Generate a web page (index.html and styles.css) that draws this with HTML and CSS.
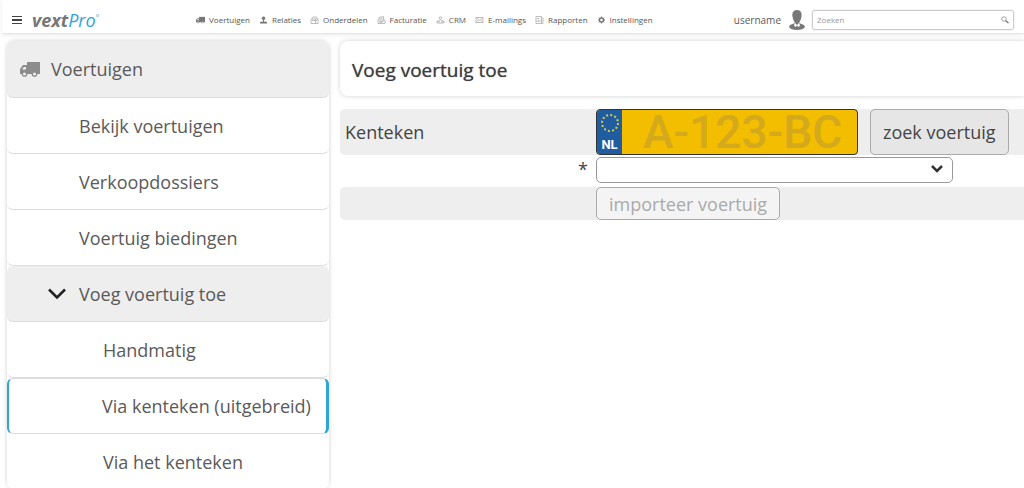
FILE: index.html
```
<!DOCTYPE html>
<html lang="nl">
<head>
    <meta charset="utf-8">
    <title>vextPro - Voeg voertuig toe</title>
    <link rel="stylesheet" href="styles.css">
</head>
<body>
    <svg class="defs" width="0" height="0">
        <symbol id="truck" viewBox="0 0 20 16">
            <path d="M7 1h13v12H0V8l3-4h4zM6 6H4L2 8.500h4z" fill="currentColor" fill-rule="evenodd"/>
            <circle cx="4.500" cy="13" r="2.200" fill="#eee" stroke="currentColor" stroke-width="1.300"/>
            <circle cx="14.500" cy="13" r="2.200" fill="#eee" stroke="currentColor" stroke-width="1.300"/>
        </symbol>
    </svg>

    <header class="topbar">
        <button class="menu-button" aria-label="Menu"></button>
        <a class="logo" href="#">vext<span>Pro</span><sup>°</sup></a>
        <nav class="topnav">
            <a href="#"><svg viewBox="0 0 20 16"><use href="#truck"/></svg>Voertuigen</a>
            <a href="#"><svg viewBox="0 0 16 16"><circle cx="8" cy="4.500" r="3.500" fill="currentColor"/><path d="M7 8h2v3l6 1v3H1v-3l6-1z" fill="currentColor"/></svg>Relaties</a>
            <a href="#"><svg class="light" viewBox="0 0 16 16"><path d="M1 6h14v9H1zM3 6l2-4h7l2 4M3 9h10M10 6v9" /></svg>Onderdelen</a>
            <a href="#"><svg class="light" viewBox="0 0 16 16"><path d="M3 8V3l9-2v8M1 8h14v7H1zM5 5l5-1M4 11h8M4 13h5"/></svg>Facturatie</a>
            <a href="#"><svg class="light" viewBox="0 0 16 16"><circle cx="8" cy="4" r="2.500"/><path d="M4 10q4-5 8 0M1 10h4v4H1zM11 10h4v4h-4zM5 14h6"/></svg>CRM</a>
            <a href="#"><svg class="light" viewBox="0 0 16 16"><path d="M1 3h14v10H1zL8 9l7-6M1 13l5-5M15 13l-5-5"/></svg>E-mailings</a>
            <a href="#"><svg class="light" viewBox="0 0 16 16"><path d="M1 1h11v14H1zM12 4h3v11h-3M3 5h5M3 12V9M6 12V7M9 12V8"/></svg>Rapporten</a>
            <a href="#"><svg viewBox="0 0 16 16"><circle cx="8" cy="8" r="4" fill="none" stroke="currentColor" stroke-width="3"/><path d="M8 1v3M8 12v3M1 8h3M12 8h3M3 3l2 2M11 11l2 2M3 13l2-2M11 5l2-2" stroke="currentColor" stroke-width="2"/></svg>Instellingen</a>
        </nav>
        <a class="user" href="#">username
            <svg viewBox="0 0 16 20"><path d="M8 0c4 0 5 3 4.500 6.500C12 10 11 11 10 13l5 2 1 2c-1 2-4 3-8 3s-7-1-8-3l1-2 5-2C5 11 4 10 3.500 6.500 3 3 4 0 8 0z" fill="#777"/><path d="M6 13l2 2 2-2 1 2-1 2-2-1-2 1-1-2z" fill="#fff"/><path d="M8 15l1 4H7z" fill="#777"/></svg>
        </a>
        <form class="search">
            <input type="text" placeholder="Zoeken" aria-label="Zoeken">
            <svg viewBox="0 0 16 16"><circle cx="6" cy="6" r="4.500" fill="none" stroke="#888" stroke-width="1.500"/><path d="M9.500 9.500L15 14" stroke="#777" stroke-width="3"/></svg>
        </form>
    </header>

    <div class="page">
        <nav class="sidebar">
            <a class="item head" href="#"><svg class="truck" viewBox="0 0 20 16"><use href="#truck"/></svg>Voertuigen</a>
            <a class="item sub" href="#">Bekijk voertuigen</a>
            <a class="item sub" href="#">Verkoopdossiers</a>
            <a class="item sub" href="#">Voertuig biedingen</a>
            <a class="item open" href="#"><svg class="chevron" viewBox="0 0 18 12"><path d="M1 1.500l8 8 8-8" fill="none" stroke="#222" stroke-width="2.500"/></svg>Voeg voertuig toe</a>
            <a class="item leaf" href="#">Handmatig</a>
            <a class="item leaf active" href="#">Via kenteken (uitgebreid)</a>
            <a class="item leaf" href="#">Via het kenteken</a>
        </nav>

        <main class="content">
            <h1 class="title">Voeg voertuig toe</h1>
            <form class="form">
                <div class="row shaded">
                    <label for="plate">Kenteken</label>
                    <div class="plate">
                        <div class="country">
                            <svg viewBox="0 0 20 20"><circle cx="10" cy="10" r="8" fill="none" stroke="#d3cb45" stroke-width="2" stroke-dasharray="2 2.189"/></svg>
                            NL
                        </div>
                        <input type="text" id="plate" placeholder="A-123-BC">
                    </div>
                    <button type="button" class="find">zoek voertuig</button>
                </div>
                <div class="row choice">
                    <label for="type">*</label>
                    <div class="select">
                        <select id="type"><option></option></select>
                        <svg viewBox="0 0 12 8"><path d="M1 1l5 5 5-5" fill="none" stroke="#333" stroke-width="2.500"/></svg>
                    </div>
                </div>
                <div class="row shaded">
                    <span class="empty"></span>
                    <button type="button" class="import" disabled>importeer voertuig</button>
                </div>
            </form>
        </main>
    </div>
</body>
</html>
```
FILE: styles.css
```
* { box-sizing: border-box; }
body { margin: 0; height: 100vh; overflow: hidden; display: flex; flex-direction: column; background: #fff; color: #5a5a5a; font-family: "Open Sans", sans-serif; font-size: 18px; }
a { color: inherit; text-decoration: none; }
input, button, select { font-family: inherit; }
.defs { position: absolute; }

/* top bar */
.topbar { display: flex; align-items: center; flex: none; height: 34px; margin-left: 2px; padding: 6px 10px 0; border-bottom: 1px solid #e6e6e6; box-shadow: 0 1px 4px #e8e8e8; }
.menu-button { width: 10px; height: 8px; padding: 0; border: solid #444; border-width: 1px 0; background: linear-gradient(#444, #444) center / 100% 2px no-repeat; }
.logo { margin-left: 10px; color: #777; font-size: 18px; line-height: 24px; font-weight: 700; font-style: italic; white-space: nowrap; }
.logo span { color: #2fa5d5; font-weight: 400; }
.logo sup { color: #2fa5d5; font-size: 8px; line-height: 8px; font-weight: 400; }
.topnav { display: flex; gap: 9px; margin-left: 97px; color: #555; font-size: 8px; line-height: 14px; }
.topnav a { display: flex; align-items: center; gap: 4px; }
.topnav svg { width: 9px; height: 8px; color: #777; }
.topnav .light { fill: none; stroke: #aaa; stroke-width: 1.5; }
.user { display: flex; align-items: center; gap: 8px; margin-left: auto; font-size: 10px; }
.user svg { width: 16px; height: 20px; }
.search { position: relative; width: 202px; height: 20px; margin-left: 7px; }
.search input { display: block; width: 100%; height: 100%; padding: 0 20px 0 4px; border: 1px solid #ccc; border-radius: 3px; background: #fff; box-shadow: 0 0 2px #ddd; font-size: 8px; }
.search input::placeholder { color: #999; }
.search svg { position: absolute; top: 6px; right: 5px; width: 8px; height: 8px; }

.page { display: flex; flex: 1; gap: 11px; min-height: 0; padding: 7px 0 0 7px; }

/* sidebar */
.sidebar { flex: none; width: 322px; border-radius: 8px; box-shadow: 0 0 5px #d0d0d0; }
.item { display: flex; align-items: center; height: 56px; border-bottom: 1px solid #ddd; border-radius: 6px; background: #fff; }
.head { height: 57px; padding-left: 13px; gap: 11px; background: #eee; }
.truck { width: 20px; height: 16px; color: #8c8c8c; }
.sub { padding-left: 72px; }
.open { padding-left: 41px; gap: 13px; background: #eee; }
.chevron { width: 18px; height: 12px; }
.leaf { padding-left: 96px; }
.active { padding-left: 93px; border: 1px solid #ddd; border-left: 2px solid #2fa5d5; border-right: 3px solid #2fa5d5; }

/* form */
.content { flex: 1; min-width: 0; }
.title { margin: 0; padding: 17px 12px 14px; border-radius: 8px 0 0 8px; box-shadow: 0 0 5px #d0d0d0; color: #3c3c3c; font-size: 19px; line-height: 24px; font-weight: 500; text-shadow: 0 0 1px #777; }
.form { padding-top: 13px; color: #444; }
.row { display: flex; }
.shaded { border-radius: 5px 0 0 5px; background: #eee; }
.row label, .empty { flex: none; width: 256px; padding-left: 5px; align-self: center; }
.plate { display: flex; width: 262px; height: 46px; border: 1px solid #333; border-radius: 4px; background: #f3bd00; overflow: hidden; }
.country { display: flex; flex-direction: column; align-items: center; flex: none; width: 25px; padding-top: 3px; background: #1f5da0; color: #fff; font-family: Roboto, sans-serif; font-size: 13px; line-height: 15px; font-weight: 700; }
.country svg { width: 20px; height: 20px; margin-bottom: 4px; }
.plate input { flex: 1; min-width: 0; padding: 0 0 0 21px; border: 0; background: none; font-family: Roboto, sans-serif; font-size: 46px; font-weight: 500; }
.plate input::placeholder { color: #d5a91c; }
.find { height: 46px; margin-left: 12px; padding: 0 12px; border: 1px solid #aaa; border-radius: 5px; background: #e6e6e6; color: #444; font-size: 18px; }
.choice { padding: 1px 0 5px; }
.row.choice label { padding-right: 8px; text-align: right; }
.select { position: relative; width: 357px; height: 26px; }
.select select { appearance: none; width: 100%; height: 100%; border: 1px solid #999; border-radius: 5px; background: #fff; }
.select svg { position: absolute; top: 9px; right: 10px; width: 12px; height: 8px; pointer-events: none; }
.import { height: 33px; padding: 0 12px; border: 1px solid #aaa; border-radius: 5px; background: #f4f4f4; color: #aaa; font-size: 18px; }
```
